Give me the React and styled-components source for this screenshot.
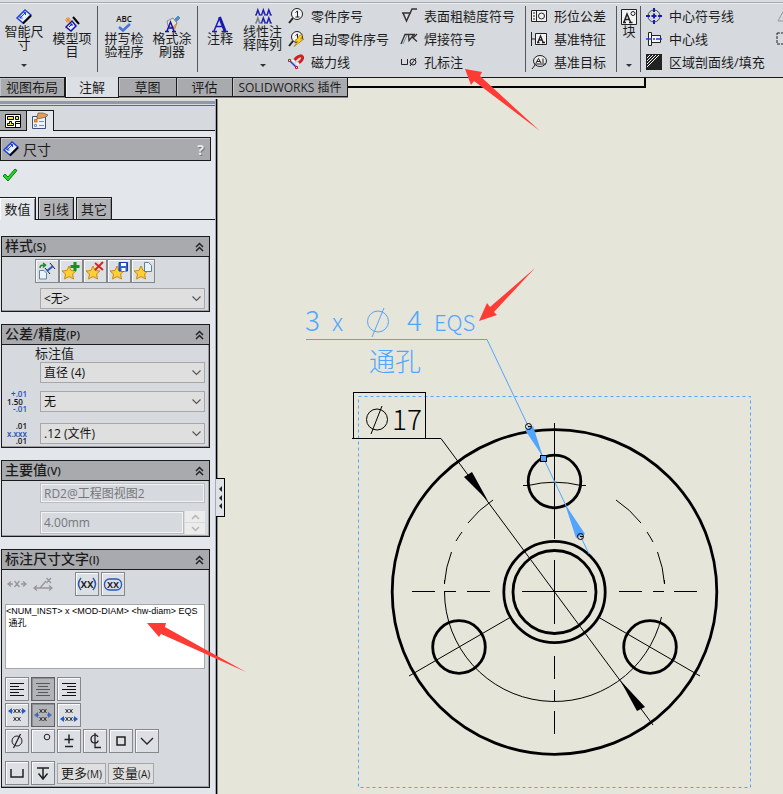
import React from 'react'
import styled, { createGlobalStyle, css } from 'styled-components'

const GlobalStyle = createGlobalStyle`
    * {
        box-sizing: border-box;
    }
    body {
        margin: 0;
        background: #e5e5da;
        color: #1c1c1c;
        font-family: "Open Sans", "Noto Sans CJK SC", sans-serif;
        font-size: 13px;
        overflow: hidden;
    }
    button, input, select, textarea {
        font: inherit;
        color: inherit;
        margin: 0;
        padding: 0;
        border-radius: 0;
    }
    svg {
        display: block;
        flex: none;
        overflow: visible;
    }
`

const Window = styled.div`
    position: relative;
    display: flex;
    flex-direction: column;
    min-height: 100vh;
`

/* ---------- ribbon ---------- */

const Ribbon = styled.header`
    display: flex;
    border-top: 2px solid #d9dce0;
    box-shadow: inset 0 1px #a9abb0, inset 0 2px #eceef1;
    border-bottom: 1px solid #1a1a1a;
    background: #d6d9de;
    padding: 2px 0 1px;
    overflow: hidden;
`

const Separator = styled.div`
    flex: none;
    width: 1px;
    margin: 2px 2px 4px 1px;
    background: #55575c;
`

const BigButton = styled.button`
    flex: none;
    display: flex;
    flex-direction: column;
    align-items: center;
    width: ${props => props.$width || 48}px;
    height: 72px;
    padding: ${props => (props.$menu ? '5px 0 9px' : '12px 0 9px')};
    border: 0;
    background: none;
    line-height: 13px;
    white-space: pre;
`

const MenuArrow = styled.span`
    margin-top: auto;
    border: 3px solid transparent;
    border-top-color: #333;
    border-bottom: 0;
`

const CommandColumn = styled.div`
    flex: none;
    display: flex;
    flex-direction: column;
    padding: 0 9px 0 3px;
`

const Command = styled.button`
    display: flex;
    align-items: center;
    gap: 7px;
    height: 23px;
    border: 0;
    background: none;
    white-space: nowrap;
`

/* ---------- command tabs ---------- */

const TabStrip = styled.nav`
    display: flex;
    align-items: flex-start;
    height: 21px;
`

const Tab = styled.button`
    flex: none;
    width: ${props => props.$width}px;
    height: 19px;
    border: 0;
    border-right: 1px solid #1a1a1a;
    border-bottom: 1px solid #1a1a1a;
    box-shadow: inset 1px 1px #c3c4c8, 0 1px #85868a;
    background: #a9aaae;
    font-size: ${props => (props.$small ? 12 : 13)}px;
    line-height: 17px;
    white-space: nowrap;
    ${props => props.$active && css`
        height: 21px;
        margin-top: -1px;
        border-left: 1px solid #1a1a1a;
        background: #dcdfe4;
        box-shadow: inset 1px 0 #f2f3f5;
        line-height: 19px;
    `}
`

const SheetEdge = styled.div`
    flex: 0 1 298px;
    height: 10px;
    border-right: 2px solid #000;
    border-bottom: 2px solid #000;
`

/* ---------- property panel ---------- */

const Workspace = styled.main`
    flex: 1;
    display: flex;
`

const Panel = styled.aside`
    flex: none;
    width: 215px;
    background: #e3e6eb;
`

const PanelGrip = styled.div`
    height: 7px;
    border-top: 2px solid #d6d9de;
    border-bottom: 1px solid #5f6888;
    background: linear-gradient(#9297ad 3px, #d6d9de 3px);
`

const ManagerTabs = styled.div`
    display: flex;
    align-items: flex-end;
    height: 25px;
    padding-top: 4px;
    background: #d6d9de;
    box-shadow: inset 0 -1px #1a1a1a;
`

const ManagerTab = styled.button`
    display: grid;
    place-items: center;
    width: 27px;
    height: ${props => (props.$active ? 21 : 20)}px;
    align-self: flex-start;
    border: 1px solid #1a1a1a;
    border-width: 1px 1px 0 0;
    background: ${props => (props.$active ? '#e3e6eb' : '#a9aaae')};
`

const PanelTitle = styled.h1`
    display: flex;
    align-items: center;
    gap: 4px;
    height: 24px;
    margin: 6px 4px 0 0;
    padding: 0 6px 0 2px;
    border: 1px solid #1a1a1a;
    box-shadow: inset 1px 1px #c6c7ca;
    background: #a9aaae;
    font-size: 14px;
    font-weight: 400;
`

const HelpButton = styled.button`
    margin-left: auto;
    border: 0;
    background: none;
    color: #e9eaec;
    font-weight: 700;
    text-shadow: 1px 1px #77787c;
`

const OkButton = styled.button`
    display: block;
    margin: 6px 0 14px 2px;
    border: 0;
    background: none;
`

const PageTabs = styled.div`
    display: flex;
    gap: 2px;
    height: 23px;
    margin-bottom: 16px;
    box-shadow: inset 0 -1px #1a1a1a;
`

const PageTab = styled.button`
    width: 36px;
    height: ${props => (props.$active ? 23 : 22)}px;
    border: 1px solid #1a1a1a;
    border-width: 1px 1px 0 ${props => (props.$active ? 0 : 1)}px;
    box-shadow: inset 1px 1px ${props => (props.$active ? '#f8f9fa' : '#cdced2')}, inset -1px 0 #8a8b8f;
    background: ${props => (props.$active ? '#e3e6eb' : '#b0b1b5')};
    line-height: 20px;
`

const Groups = styled.div`
    display: flex;
    flex-direction: column;
    gap: 12px;
    padding: 0 5px 6px 1px;
`

const GroupBox = styled.section`
    border: 1px solid #1a1a1a;
    background: #d6d9de;
    box-shadow: inset -1px -1px #9a9ca1;
`

const GroupHeader = styled.h2`
    display: flex;
    align-items: center;
    justify-content: space-between;
    height: 20px;
    margin: 0;
    padding: 0 5px 0 3px;
    border-bottom: 1px solid #1a1a1a;
    background: #a9aaae;
    font-size: 14px;
    font-weight: 500;
    line-height: 18px;

    small {
        font-size: 11px;
        font-weight: 600;
    }
`

const GroupBody = styled.div`
    display: flex;
    flex-direction: column;
    gap: ${props => props.$gap}px;
    padding: 2px 4px 2px 3px;
`

const Tools = styled.div`
    display: flex;
    align-items: center;
    gap: ${props => (props.$joined ? 0 : 2)}px;
    margin-left: ${props => (props.$joined ? 30 : 0)}px;
`

const ToolStack = styled.div`
    display: flex;
    flex-direction: column;
    gap: 2px;
`

const ToolButton = styled.button`
    flex: none;
    display: grid;
    place-items: center;
    width: 24px;
    height: 24px;
    border: 1px solid #85878c;
    box-shadow: inset 1px 1px #fafbfc;
    background: #dcdfe3;
    ${props => props.$pressed && css`
        border-color: #5f6166;
        box-shadow: inset 1px 1px #8d8f94;
        background: #b3b4b8;
    `}
    ${props => props.$flat && css`
        border-color: transparent;
        box-shadow: none;
        background: none;
    `}
    ${props => props.$apart && css`
        margin-left: 18px;
    `}
`

const TextButton = styled.button`
    height: 21px;
    padding: 0 3px;
    border: 1px solid #a5a7ab;
    background: #dfdfdf;
    line-height: 18px;
    white-space: nowrap;

    small {
        font-size: 10px;
    }
`

const Caption = styled.label`
    display: block;
    padding-left: 33px;
    line-height: 17px;
`

const Fields = styled.div`
    display: flex;
    flex-direction: column;
    gap: 5px;
    padding: 0 4px 0 3px;
`

const Field = styled.div`
    display: grid;
    grid-template-columns: 35px 1fr;
    align-items: center;
    min-height: ${props => (props.$tall ? 27 : 20)}px;
`

const SelectBox = styled.span`
    grid-column: 2;
    display: grid;
    align-items: center;

    > * {
        grid-area: 1 / 1;
    }
    svg {
        justify-self: end;
        margin-right: 4px;
        pointer-events: none;
    }
`

const Select = styled.select`
    appearance: none;
    width: 100%;
    height: 21px;
    padding: 0 20px 0 3px;
    border: 1px solid #a5a7ab;
    background: #dfdfdf;
    color: #111;
    font-size: 12px;
    line-height: 18px;
`

const FieldValue = styled.div`
    grid-column: 2;
    display: grid;
    grid-template-columns: ${props => (props.$spin ? '1fr 20px' : '1fr')};
    gap: 1px;
`

const ValueInput = styled.input`
    width: 100%;
    min-width: 0;
    height: ${props => (props.$tall ? 23 : 20)}px;
    padding: 0 3px;
    border: 1px solid #b9bbbf;
    box-shadow: inset 0 0 0 1px #f2f3f4;
    background: #d6d9de;
    color: #75777b;
    font-size: 12px;
`

const Spinner = styled.div`
    display: grid;
    grid-template-rows: 1fr 1fr;
    gap: 1px;
`

const SpinButton = styled.button`
    display: grid;
    place-items: center;
    border: 0;
    background: #ececec;
`

const TextArea = styled.textarea`
    display: block;
    width: 100%;
    height: 65px;
    border: 1px solid #a5a7ab;
    background: #fff;
    color: #000;
    font-family: "Liberation Sans", "Noto Sans CJK SC", sans-serif;
    font-size: 9px;
    line-height: 12px;
    resize: none;
    outline: 0;
    overflow: hidden;
`

const Splitter = styled.div`
    position: relative;
    flex: none;
    width: 3px;
    border-left: 1px solid #a3a9ba;
    border-right: 1px solid #8e9092;
    background: #000;
`

const SplitterHandle = styled.button`
    position: absolute;
    top: 379px;
    left: 0;
    display: flex;
    flex-direction: column;
    align-items: flex-end;
    justify-content: space-evenly;
    width: 9px;
    height: 39px;
    padding: 4px 2px;
    border: 1px solid #000;
    border-left: 0;
    background: #dfe2e7;

    i {
        border: 3px solid transparent;
        border-right-color: #222;
        border-left: 0;
    }
`

const Canvas = styled.div`
    flex: 1;
    min-width: 0;
    overflow: hidden;
    background: #e5e5da;
`

const Markup = styled.svg`
    position: absolute;
    top: 0;
    left: 0;
    pointer-events: none;
`

/* ---------- icons ---------- */

const Icon = ({ children, w = 16, h = 16 }) => (
    <svg width={w} height={h} viewBox={`0 0 ${w} ${h}`} fill="none" stroke="#222" aria-hidden="true">
        {children}
    </svg>
)

const DimensionIcon = () => (
    <Icon>
        <path d="M1 9 L9 1 L15 6 L7 14 Z" fill="#e8eefc" stroke="#1b3fd8" strokeWidth="1.5" />
        <path d="M7 14.5 L15 6.5" stroke="#000" strokeWidth="2" />
        <path d="M4 9 L9.500 3.500 M4 6.500 V9 H6.500 M7.500 3.500 H9.500 V6" stroke="#1b3fd8" />
    </Icon>
)

const ModelItemsIcon = () => (
    <Icon>
        <path d="M2 11 L8 5 L12 10 L7 15 Z" fill="#e8eefc" stroke="#1414a8" strokeWidth="1.5" />
        <path d="M9 1 L15 8" stroke="#000" strokeWidth="2" />
        <path d="M4 1 V7 M1 4 H7 M2 2 L6 6 M6 2 L2 6" stroke="#f08a1c" />
        <path d="M5 11 L8 8 M6 8 H8 V10" stroke="#1414a8" />
    </Icon>
)

const SpellIcon = () => (
    <Icon>
        <text x="8" y="6" fontSize="8" fontWeight="600" textAnchor="middle" fill="#111" stroke="none">ABC</text>
        <path d="M3 11 L7 14.500 L14 8" stroke="#4477d8" strokeWidth="2.500" />
    </Icon>
)

const PainterIcon = () => (
    <Icon>
        <path d="M10 4 L14 0 L16 2 L12 6 Z" fill="#4a90d0" stroke="#2b6298" strokeWidth=".5" />
        <path d="M3 5 L9 2 L13 7 L10 12 L4 10 Z" fill="#e4e2da" stroke="#8a8a88" />
        <path d="M9 11 L13 7 L11 13 Z" fill="#e8a642" stroke="#b87818" strokeWidth=".5" />
        <path d="M1 15.500 H5 M8 15.500 H12 M3 15 L6.500 6 L10 15 M4.500 12 H8.500" stroke="#1414a8" strokeWidth="1.500" />
    </Icon>
)

const NoteIcon = () => (
    <Icon>
        <path d="M2 15 L7.500 2" stroke="#1a1ab0" strokeWidth="1.500" />
        <path d="M7.500 1 L13 15" stroke="#1a1ab0" strokeWidth="3" />
        <path d="M0 15.500 H5 M9.500 15.500 H16 M4 10.500 H11" stroke="#1a1ab0" strokeWidth="1.300" />
    </Icon>
)

// one small serif letter mark of the note pattern
const PatternMark = ({ x, y, color }) => (
    <path
        d={`M${x} ${y + 6} h2 M${x + 3.5} ${y + 6} h2.500 M${x + 1} ${y + 6} l1.800 -5.500 l2 5.500 M${x + 1.5} ${y + 4} h2.500`}
        stroke={color}
        strokeWidth="1.200"
    />
)

const PatternIcon = () => (
    <Icon>
        {[0, 1, 2].map(i => <PatternMark key={i} x={i * 5.5} y={0} color="#1a1ab0" />)}
        {[0, 1, 2].map(i => <PatternMark key={i} x={i * 5.5} y={8} color={i ? '#1a1ab0' : '#77797e'} />)}
    </Icon>
)

const Balloon = () => (
    <>
        <circle cx="9" cy="6" r="5.500" fill="#f4f4f4" />
        <path d="M5 10 L1 15" strokeWidth="2" />
        <path d="M7.500 4.500 L9.500 3 V9 M7.500 9 H11.500" />
    </>
)

const BalloonIcon = () => <Icon><Balloon /></Icon>

const AutoBalloonIcon = () => (
    <Icon>
        <Balloon />
        <path d="M12 4 H15 L12.500 8 H16 L6 15.500 L9.500 10.500 H7 Z" fill="#ffd21c" stroke="#9a6a00" strokeWidth=".6" />
    </Icon>
)

const MagnetIcon = () => (
    <Icon>
        <path d="M6 6.500 L9 3.500 Q13 .500 14.500 3 Q15.500 5.500 10 9.500" stroke="#d02020" strokeWidth="3" />
        <path d="M5 7.500 L6.500 6 M9 10.500 L11 9" stroke="#f4f4f4" strokeWidth="3" />
        <path d="M2 7 L8 13" stroke="#1b3fd8" strokeWidth="1.500" />
        <path d="M.500 5.500 h2 v2 h-2 z M7.500 12.500 h2 v2 h-2 z" fill="#fff" stroke="#c01818" />
    </Icon>
)

const RoughnessIcon = () => (
    <Icon>
        <path d="M1 5 H10 M2 5 L5.500 13 L11 1 H16" stroke="#333" strokeWidth="1.500" />
    </Icon>
)

const WeldIcon = () => (
    <Icon>
        <path d="M0 13 L4 3.500 H14 M6 3.500 V4 M7.500 3.500 L8 9.500 L13 3.500 M11 6 L16 10.500 M12 7 L16 3" stroke="#333" strokeWidth="1.300" />
        <path d="M2 13 L6 4" stroke="#8a8c90" />
    </Icon>
)

const HoleIcon = () => (
    <Icon>
        <path d="M.500 5 V10.500 H6.500 V5" />
        <circle cx="12" cy="8" r="3" />
        <path d="M9 12 L15 4" />
    </Icon>
)

const GeoToleranceIcon = () => (
    <Icon>
        <path d="M.500 2.500 H15.500 V13.500 H.500 Z M5.500 2.500 V13.500" fill="#f2f2f2" />
        <circle cx="10.500" cy="8" r="3" />
        <path d="M3 4 V12" strokeDasharray="2 1" />
    </Icon>
)

const DatumIcon = () => (
    <Icon>
        <path d="M.500 1 V15 M1 8 H4" />
        <path d="M4.500 2.500 H15.500 V13.500 H4.500 Z" fill="#f2f2f2" />
        <path d="M6 11.500 H8.500 M11 11.500 H14 M7 11 L9.500 5 L12 11 M8 9 H11" strokeWidth="1.300" />
    </Icon>
)

const TargetIcon = () => (
    <Icon>
        <ellipse cx="9" cy="7" rx="6.500" ry="5.500" fill="#e8e8e8" />
        <path d="M4 11 L1 15 M3 10 H15" />
        <path d="M5 9 L7.500 4.500 L10 9 M6 7.500 H9 M12 4.500 V9" />
    </Icon>
)

const BlockIcon = () => (
    <Icon>
        <path d="M.500 .500 H15.500 V15.500 H.500 Z" fill="#f4f4f4" />
        <path d="M2 13.500 H5 M8 13.500 H11.500 M3 13 L6 5 L9.500 13 M4.500 10.500 H8" strokeWidth="1.500" />
        <circle cx="12" cy="4.500" r="2" />
    </Icon>
)

const CenterMarkIcon = () => (
    <Icon>
        <circle cx="8" cy="8" r="6" stroke="#44464a" />
        <path d="M8 0 V4 M8 12 V16 M0 8 H4 M12 8 H16 M8 5.500 V10.500 M5.500 8 H10.500" stroke="#1a1ab0" strokeWidth="2" />
    </Icon>
)

const CenterlineIcon = () => (
    <Icon>
        <path d="M2.500 1.500 H5.500 V14.500 H2.500 Z M5.500 4.500 H14.500 V11.500 H5.500" fill="#f4f4f4" />
        <path d="M0 8 H6 M7 8 H9 M10 8 H16" stroke="#1b3fd8" strokeWidth="1.500" />
    </Icon>
)

const HatchIcon = () => (
    <Icon>
        <path d="M0 0 H16 V16 H0 Z" fill="#222" stroke="none" />
        <path d="M1 4 L4 1 M1 7 L7 1 M1 10 L10 1 M1 13 L13 1" stroke="#f4f4f4" />
    </Icon>
)

const RevisionIcon = () => (
    <Icon><path d="M1 13 L7 2 L13 13 Z" stroke="#96989c" /></Icon>
)

const CloudIcon = () => (
    <Icon><path d="M0 2 H14 V13 H0 Z" strokeDasharray="3 1" /></Icon>
)

const TreeTabIcon = () => (
    <Icon>
        <path d="M.500 1.500 H15.500 V14.500 H.500 Z" fill="#fff" stroke="#000" />
        <path d="M2.500 3.500 H8.500 V6.500 H2.500 Z M10.500 3.500 H13.500 V6.500 H10.500 Z M2.500 12.500 V10.500 H4.500 V8.500 H6.500 V10.500 H8.500 V12.500 Z" fill="#ffe534" stroke="#000" />
        <path d="M10.500 14 V8.500 H15 M10.500 10.500 H15" stroke="#000" />
    </Icon>
)

const PropertyTabIcon = () => (
    <Icon>
        <path d="M.500 3.500 H13.500 V15.500 H.500 Z" fill="#eef2fa" stroke="#3d5078" />
        <path d="M6 0 L11 0 L16 2 L14 4 L10 5 L5 6 L5 4 Z" fill="#dca25c" stroke="#80501c" strokeWidth=".7" />
        <path d="M2.500 6.500 H5 V9 H2.500 Z" fill="#f0a020" stroke="#c07808" />
        <path d="M2.500 11.500 H4.500 V13.500 H2.500 Z M7 8.500 H12 M7 12.500 H12" stroke="#8090a8" />
    </Icon>
)

const CheckIcon = () => (
    <Icon>
        <path d="M1 9 L3 7 L6 10 L13 2 L15 3.500 L6 14 Z" fill="#22d622" stroke="#0c7a14" />
    </Icon>
)

const CollapseIcon = () => (
    <Icon w={9} h={10}>
        <path d="M1 5 L4.500 1.500 L8 5 M1 9 L4.500 5.500 L8 9" strokeWidth="1.500" />
    </Icon>
)

const ChevronIcon = () => (
    <Icon w={9} h={6}><path d="M.500 .500 L4.500 4.500 L8.500 .500" stroke="#55575b" strokeWidth="1.200" /></Icon>
)

const Star = () => (
    <path d="M7 4 L9 8.500 L14 9 L10.500 12 L11.500 17 L7 14.500 L2.500 17 L3.500 12 L0 9 L5 8.500 Z" fill="#ffcf3a" stroke="#c98a12" />
)

const DefaultStyleIcon = () => (
    <Icon w={18} h={18}>
        <path d="M1.500 8.500 H6 L8.500 11 V17 H1.500 Z" fill="#eaf2fa" stroke="#6486a4" />
        <path d="M2 6 Q2 2.500 7 3 M5 1 L7.500 3 L5 5.500" stroke="#1c8a2a" strokeWidth="1.500" />
        <path d="M7 6 L12 12 M12 1 L17 7" stroke="#222" />
        <path d="M9 9 L15 4" stroke="#2858c8" strokeWidth="2" />
    </Icon>
)

const AddStyleIcon = () => (
    <Icon w={18} h={18}><Star /><path d="M13 0 V9 M8.500 4.500 H17.500" stroke="#15921c" strokeWidth="3" /></Icon>
)

const DeleteStyleIcon = () => (
    <Icon w={18} h={18}><Star /><path d="M9 1 L17 8 M17 0 L9 8" stroke="#d0251f" strokeWidth="1.800" /></Icon>
)

const SaveStyleIcon = () => (
    <Icon w={18} h={18}>
        <Star />
        <path d="M9 .500 H17.500 V9 H9 Z" fill="#2f62d8" stroke="#1c3f9c" />
        <path d="M11 1 H16 V4 H11 Z M11.500 6 H15.500 V9 H11.500 Z" fill="#fff" stroke="none" />
    </Icon>
)

const LoadStyleIcon = () => (
    <Icon w={18} h={18}><Star /><path d="M10.500 .500 H14.500 L17.500 3.500 V9.500 H10.500 Z" fill="#eaf2fa" stroke="#5f7f9c" /></Icon>
)

const ToleranceIcon = () => (
    <Icon w={25} h={22}>
        <g fontSize="8" fontWeight="600" stroke="none">
            <text x="22" y="6" textAnchor="end" fill="#1e50b8">+.01</text>
            <text x="2" y="14" fill="#111">1.50</text>
            <text x="22" y="21" textAnchor="end" fill="#1e50b8">-.01</text>
        </g>
    </Icon>
)

const PrecisionIcon = () => (
    <Icon w={25} h={22}>
        <g fontSize="8" fontWeight="600" stroke="none">
            <text x="22" y="6" textAnchor="end" fill="#111">.01</text>
            <text x="2" y="14" fill="#1e50b8">x.xxx</text>
            <text x="22" y="21" textAnchor="end" fill="#111">.01</text>
        </g>
    </Icon>
)

const ShiftIcon = () => (
    <Icon w={20}>
        <path d="M1 8 H6 M14 8 H19 M4 5.500 L1 8 L4 10.500 M16 5.500 L19 8 L16 10.500 M7.500 5 L12.500 11 M12.500 5 L7.500 11" stroke="#96989c" strokeWidth="1.300" />
    </Icon>
)

const LeaderShiftIcon = () => (
    <Icon w={20}>
        <path d="M1 12 H19 M4 9.500 L1 12 L4 14.500 M16 9.500 L19 12 L16 14.500 M7 12 L13 5 M13.500 2 L18 7 M18 2 L13.500 7" stroke="#96989c" strokeWidth="1.300" />
    </Icon>
)

const ParenIcon = () => (
    <Icon w={20}>
        <path d="M4 2 Q-1 8 4 14 M16 2 Q21 8 16 14" stroke="#2d5aa8" strokeWidth="1.500" />
        <text x="10" y="12" fontSize="12" fontWeight="600" textAnchor="middle" fill="#222" stroke="none">xx</text>
    </Icon>
)

const InspectionIcon = () => (
    <Icon w={20}>
        <rect x="1.500" y="3" width="17" height="11" rx="5" stroke="#2858b8" strokeWidth="1.300" />
        <text x="10" y="12" fontSize="11" fontWeight="600" textAnchor="middle" fill="#222" stroke="none">xx</text>
    </Icon>
)

// each align icon is five rules, given as [x1, x2]
const alignments = {
    left: [[1, 15], [1, 10], [1, 15], [1, 10], [1, 15]],
    center: [[1, 15], [3, 13], [1, 15], [3, 13], [1, 15]],
    right: [[1, 15], [6, 15], [1, 15], [6, 15], [1, 15]],
}

const AlignIcon = ({ kind }) => (
    <Icon>
        {alignments[kind].map(([a, b], i) => (
            <path key={i} d={`M${a} ${i * 3 + 2.5} H${b}`} stroke={kind === 'center' ? '#55575b' : '#111'} />
        ))}
    </Icon>
)

const CrossPair = ({ x, y }) => (
    <path d={`M${x} ${y} l3 4 m0 -4 l-3 4 M${x + 4} ${y} l3 4 m0 -4 l-3 4`} stroke="#333" />
)

const arrowRows = { top: 5, middle: 9, bottom: 13 }

const TextPlaceIcon = ({ kind }) => {
    const y = arrowRows[kind]
    return (
        <Icon w={18} h={18}>
            <CrossPair x={5.5} y={3} />
            <CrossPair x={5.5} y={11} />
            <path
                d={`M0 ${y} l4 -3 v6 z M18 ${y} l-4 -3 v6 z`}
                fill={kind === 'middle' ? '#4a6cb8' : '#1e5ad0'}
                stroke="none"
            />
            <path d={`M3 ${y} H5 M13 ${y} H15`} stroke="#1e5ad0" />
        </Icon>
    )
}

const DiameterIcon = () => (
    <Icon><circle cx="8" cy="8" r="5" /><path d="M4.500 15 L11.500 1" strokeWidth="1.300" /></Icon>
)

const DegreeIcon = () => <Icon><circle cx="12" cy="4" r="2.800" /></Icon>

const PlusMinusIcon = () => (
    <Icon><path d="M8 1.500 V10.500 M3.500 6.500 H12.500 M4 13.500 H12" strokeWidth="1.500" /></Icon>
)

const CenterlineSymbolIcon = () => (
    <Icon>
        <path d="M11 4 Q10 1.500 7.500 2 Q4 3 4 6 Q4 10 8 10 Q11 10 11 7.500 M8 0 V14.500 H14" strokeWidth="1.300" />
    </Icon>
)

const SquareIcon = () => <Icon><path d="M4 4 H12 V12 H4 Z" strokeWidth="1.500" /></Icon>

const CountersinkIcon = () => <Icon><path d="M2 5 L8 11 L14 5" strokeWidth="1.300" /></Icon>

const CounterboreIcon = () => <Icon><path d="M2 4 V12 H14 V4" strokeWidth="1.500" /></Icon>

const DepthIcon = () => (
    <Icon><path d="M2 3 H14 M8 3 V14 M3.500 8.500 L8 14 L12.500 8.500" strokeWidth="1.500" /></Icon>
)

/* ---------- data ---------- */

const balloonCommands = [
    ['零件序号', BalloonIcon],
    ['自动零件序号', AutoBalloonIcon],
    ['磁力线', MagnetIcon],
]

const symbolCommands = [
    ['表面粗糙度符号', RoughnessIcon],
    ['焊接符号', WeldIcon],
    ['孔标注', HoleIcon],
]

const datumCommands = [
    ['形位公差', GeoToleranceIcon],
    ['基准特征', DatumIcon],
    ['基准目标', TargetIcon],
]

const centerCommands = [
    ['中心符号线', CenterMarkIcon],
    ['中心线', CenterlineIcon],
    ['区域剖面线/填充', HatchIcon],
]

const Commands = ({ items }) => (
    <CommandColumn>
        {items.map(([label, Glyph]) => (
            <Command key={label}><Glyph />{label}</Command>
        ))}
    </CommandColumn>
)

const Group = ({ title, hotkey, children }) => (
    <GroupBox>
        <GroupHeader>
            <span>{title}<small>({hotkey})</small></span>
            <CollapseIcon />
        </GroupHeader>
        {children}
    </GroupBox>
)

const DropDown = ({ id, label, value }) => (
    <SelectBox>
        <Select id={id} aria-label={label} defaultValue={value}>
            <option>{value}</option>
        </Select>
        <ChevronIcon />
    </SelectBox>
)

/* ---------- flange view ---------- */

const Drawing = () => (
    <svg width="565" height="695" viewBox="218 99 565 695" fill="none" stroke="#000" role="img" aria-label="法兰视图">
        <rect x="358.500" y="396.500" width="392" height="391" stroke="#52a5ff" strokeDasharray="3 3" />

        <g strokeWidth="2.800">
            <circle cx="554.500" cy="592" r="162.300" />
            <circle cx="554.500" cy="592" r="50.700" />
            <circle cx="554.500" cy="592" r="41.500" />
            <circle cx="554.500" cy="481.500" r="26.300" />
            <circle cx="459" cy="647" r="26.300" />
            <circle cx="650" cy="647" r="26.300" />
        </g>

        <g shapeRendering="crispEdges">
            <path d="M412 591.500 H435 M444 591.500 H456 M467 591.500 H490 M522 591.500 H587 M619 591.500 H642 M653 591.500 H664 M674 591.500 H697" />
            <path d="M554.500 423 V539 M554.500 560 V624 M554.500 656 V679 M554.500 690 V701 M554.500 711 V734" />
        </g>
        <path d="M510 617.500 L409 676 M599 617.500 L700 676" />
        <path d="M523 485.500 H528 A110 110 0 0 1 581 485.500 H586" />
        <path d="M444.500 580 V584 M444.500 592 A110 110 0 0 0 661.500 617 M664.500 580 V584" />
        <path d="M444.500 583 A110 110 0 0 1 451.500 552 M456 541 A110 110 0 0 1 462 532 M468 523 A110 110 0 0 1 493 500" />
        <path d="M616 500 A110 110 0 0 1 641 523 M647 532 A110 110 0 0 1 653 542 M657.500 552 A110 110 0 0 1 664.500 584" />

        <path d="M353.500 438.500 V392.500 H425.500 V438.500 M352 438.500 H441" shapeRendering="crispEdges" />
        <path d="M441 438.500 L653 725" />
        <path d="M488 501 L464 477 L472 472 Z M620 680 L637 711 L645 707 Z" fill="#000" stroke="none" />
        <circle cx="377" cy="419.500" r="10.500" />
        <path d="M371 434 L382 406" />

        <g stroke="#52a5ff">
            <path d="M306 339.500 H487" shapeRendering="crispEdges" />
            <path d="M487 339.500 L589 554" />
            <path d="M525 430 L533 426 L543 457 Z M565 504 L576 538 L585 534 Z" fill="#52a5ff" stroke="none" />
            <circle cx="378" cy="321.500" r="10.500" />
            <path d="M372 337 L384 308" />
        </g>
        <circle cx="528.500" cy="426.500" r="3" />
        <circle cx="580.500" cy="536.500" r="3" />
        <path d="M528 426.500 H531 M580 536.500 H583" />
        <rect x="540.500" y="455.500" width="6" height="6" fill="#52a5ff" />

        <g stroke="none" fontFamily="'Noto Sans CJK SC', sans-serif" fontWeight="300" fontSize="28">
            <g fill="#52a5ff">
                <text x="305" y="331">3</text>
                <text x="332" y="331" fontSize="24">x</text>
                <text x="407" y="331">4</text>
                <text x="434" y="331" fontSize="22">EQS</text>
                <text x="369" y="371" fontSize="26">通孔</text>
            </g>
            <text x="392" y="430" fill="#000">17</text>
        </g>
    </svg>
)

const App = () => {
    return (
        <Window>
            <GlobalStyle />
            <Ribbon>
                <BigButton $menu><DimensionIcon />{'智能尺\n寸'}<MenuArrow /></BigButton>
                <BigButton><ModelItemsIcon />{'模型项\n目'}</BigButton>
                <Separator />
                <BigButton><SpellIcon />{'拼写检\n验程序'}</BigButton>
                <BigButton><PainterIcon />{'格式涂\n刷器'}</BigButton>
                <Separator />
                <BigButton $width={40}><NoteIcon />注释</BigButton>
                <BigButton $width={45} $menu><PatternIcon />{'线性注\n释阵列'}<MenuArrow /></BigButton>
                <Commands items={balloonCommands} />
                <Commands items={symbolCommands} />
                <Separator />
                <Commands items={datumCommands} />
                <Separator />
                <BigButton $width={20} $menu><BlockIcon />块<MenuArrow /></BigButton>
                <Separator />
                <Commands items={centerCommands} />
                <CommandColumn>
                    <Command aria-label="修订符号"><RevisionIcon /></Command>
                    <Command aria-label="修订云"><CloudIcon /></Command>
                </CommandColumn>
            </Ribbon>

            <TabStrip>
                <Tab $width={65}>视图布局</Tab>
                <Tab $width={54} $active>注解</Tab>
                <Tab $width={58}>草图</Tab>
                <Tab $width={56}>评估</Tab>
                <Tab $width={115} $small>SOLIDWORKS 插件</Tab>
                <SheetEdge />
            </TabStrip>

            <Workspace>
                <Panel>
                    <PanelGrip />
                    <ManagerTabs>
                        <ManagerTab aria-label="设计树"><TreeTabIcon /></ManagerTab>
                        <ManagerTab aria-label="属性" $active><PropertyTabIcon /></ManagerTab>
                    </ManagerTabs>
                    <PanelTitle>
                        <DimensionIcon />
                        尺寸
                        <HelpButton>?</HelpButton>
                    </PanelTitle>
                    <OkButton aria-label="确定"><CheckIcon /></OkButton>
                    <PageTabs>
                        <PageTab $active>数值</PageTab>
                        <PageTab>引线</PageTab>
                        <PageTab>其它</PageTab>
                    </PageTabs>

                    <Groups>
                        <Group title="样式" hotkey="S">
                            <GroupBody $gap={5}>
                                <Tools $joined>
                                    <ToolButton aria-label="默认样式"><DefaultStyleIcon /></ToolButton>
                                    <ToolButton aria-label="添加样式"><AddStyleIcon /></ToolButton>
                                    <ToolButton aria-label="删除样式"><DeleteStyleIcon /></ToolButton>
                                    <ToolButton aria-label="保存样式"><SaveStyleIcon /></ToolButton>
                                    <ToolButton aria-label="装入样式"><LoadStyleIcon /></ToolButton>
                                </Tools>
                                <Field><DropDown label="样式" value="<无>" /></Field>
                            </GroupBody>
                        </Group>

                        <Group title="公差/精度" hotkey="P">
                            <Caption htmlFor="callout">标注值</Caption>
                            <Fields>
                                <Field><DropDown id="callout" value="直径 (4)" /></Field>
                                <Field $tall><ToleranceIcon /><DropDown label="公差类型" value="无" /></Field>
                                <Field $tall><PrecisionIcon /><DropDown label="单位精度" value=".12 (文件)" /></Field>
                            </Fields>
                        </Group>

                        <Group title="主要值" hotkey="V">
                            <GroupBody $gap={8}>
                                <Field>
                                    <FieldValue>
                                        <ValueInput aria-label="名称" defaultValue="RD2@工程图视图2" disabled />
                                    </FieldValue>
                                </Field>
                                <Field>
                                    <FieldValue $spin>
                                        <ValueInput aria-label="尺寸值" defaultValue="4.00mm" disabled $tall />
                                        <Spinner>
                                            <SpinButton aria-label="增加" disabled>
                                                <Icon w={9} h={6}><path d="M1 5 L4.500 1.500 L8 5" stroke="#b5b5b5" strokeWidth="1.500" /></Icon>
                                            </SpinButton>
                                            <SpinButton aria-label="减少" disabled>
                                                <Icon w={9} h={6}><path d="M1 1 L4.500 4.500 L8 1" stroke="#b5b5b5" strokeWidth="1.500" /></Icon>
                                            </SpinButton>
                                        </Spinner>
                                    </FieldValue>
                                </Field>
                            </GroupBody>
                        </Group>

                        <Group title="标注尺寸文字" hotkey="I">
                            <GroupBody $gap={8}>
                                <Tools>
                                    <ToolButton $flat aria-label="居中尺寸"><ShiftIcon /></ToolButton>
                                    <ToolButton $flat aria-label="等距文字"><LeaderShiftIcon /></ToolButton>
                                    <ToolButton $apart aria-label="添加括号"><ParenIcon /></ToolButton>
                                    <ToolButton aria-label="审查尺寸"><InspectionIcon /></ToolButton>
                                </Tools>
                                <TextArea
                                    aria-label="标注尺寸文字"
                                    spellCheck={false}
                                    defaultValue={'<NUM_INST> x <MOD-DIAM> <hw-diam> EQS\n 通孔'}
                                />
                                <ToolStack>
                                    <Tools>
                                        <ToolButton aria-label="左对齐"><AlignIcon kind="left" /></ToolButton>
                                        <ToolButton aria-label="居中" $pressed><AlignIcon kind="center" /></ToolButton>
                                        <ToolButton aria-label="右对齐"><AlignIcon kind="right" /></ToolButton>
                                    </Tools>
                                    <Tools>
                                        <ToolButton aria-label="顶部"><TextPlaceIcon kind="top" /></ToolButton>
                                        <ToolButton aria-label="中间" $pressed><TextPlaceIcon kind="middle" /></ToolButton>
                                        <ToolButton aria-label="底部"><TextPlaceIcon kind="bottom" /></ToolButton>
                                    </Tools>
                                    <Tools>
                                        <ToolButton aria-label="直径"><DiameterIcon /></ToolButton>
                                        <ToolButton aria-label="度"><DegreeIcon /></ToolButton>
                                        <ToolButton aria-label="正负"><PlusMinusIcon /></ToolButton>
                                        <ToolButton aria-label="中心线"><CenterlineSymbolIcon /></ToolButton>
                                        <ToolButton aria-label="方形"><SquareIcon /></ToolButton>
                                        <ToolButton aria-label="锥形沉头孔"><CountersinkIcon /></ToolButton>
                                    </Tools>
                                </ToolStack>
                                <Tools>
                                    <ToolButton aria-label="柱形沉头孔"><CounterboreIcon /></ToolButton>
                                    <ToolButton aria-label="深度"><DepthIcon /></ToolButton>
                                    <TextButton>更多<small>(M)</small></TextButton>
                                    <TextButton>变量<small>(A)</small></TextButton>
                                </Tools>
                            </GroupBody>
                        </Group>
                    </Groups>
                </Panel>

                <Splitter>
                    <SplitterHandle aria-label="折叠面板"><i /><i /><i /></SplitterHandle>
                </Splitter>

                <Canvas><Drawing /></Canvas>
            </Workspace>

            <Markup width="783" height="794" fill="#ff3b36" aria-hidden="true">
                <path d="M465 69 L482 72 L480 76 L540 131 L474 81 L471 85 Z" />
                <path d="M479 321 L487 303 L490 307 L535 268 L494 312 L497 315 Z" />
                <path d="M147 623 L166 623 L165 627 L246 672 L161 634 L159 637 Z" />
            </Markup>
        </Window>
    )
}

export default App
